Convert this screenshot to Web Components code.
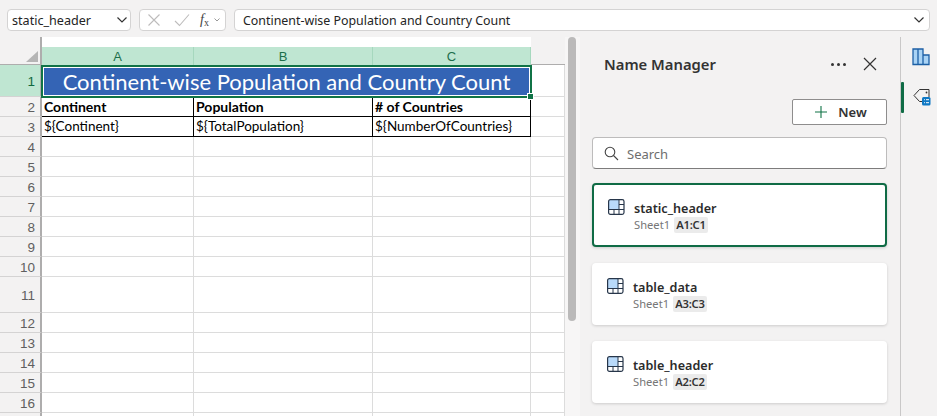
<!DOCTYPE html>
<html>
<head>
<meta charset="utf-8">
<style>
  html, body { margin: 0; height: 416px; overflow: hidden; background: #f3f2f2; }
  body { display: flex; flex-direction: column; font-family: "Noto Sans", sans-serif; color: #242424; }
  .main { display: flex; flex: 1; min-height: 0; }
</style>
</head>
<body>
<formula-bar name="static_header" formula="Continent-wise Population and Country Count"></formula-bar>
<div class="main">
  <sheet-grid></sheet-grid>
  <sheet-scroll></sheet-scroll>
  <name-panel>
    <name-card name="static_header" range="A1:C1" selected></name-card>
    <name-card name="table_data" range="A3:C3"></name-card>
    <name-card name="table_header" range="A2:C2"></name-card>
  </name-panel>
  <side-rail></side-rail>
</div>
<script>
class FormulaBar extends HTMLElement {
    constructor() {
        super();
        this.attachShadow({ mode: 'open' });
    }

    connectedCallback() {
        const name = this.getAttribute('name') || '';
        const formula = this.getAttribute('formula') || '';
        const chevron = `<svg width="12" height="8" viewBox="0 0 12 8"><path d="M1.5 1.5 6 6l4.5-4.5" fill="none" stroke="#333" stroke-width="1.2"/></svg>`;
        this.shadowRoot.innerHTML = `
            <style>
                :host { display: flex; height: 37px; padding: 9px 7px 0 7px; box-sizing: border-box; font: 12.4px "Noto Sans", sans-serif; color: #242424; background: #f3f2f2; }
                .box { height: 22px; box-sizing: border-box; background: #fff; border: 1px solid #d4d3d3; border-radius: 4px; display: flex; align-items: center; }
                .box span { padding-top: 1px; }
                .name { width: 124px; padding: 0 2px 0 4px; justify-content: space-between; font-size: 12.6px; }
                .fx { width: 87px; margin-left: 8px; padding-left: 7px; }
                .fx i { font: italic 14px "Liberation Serif", serif; color: #444; margin-left: 10px; }
                .fx i sub { font-size: 10px; font-style: normal; vertical-align: -2px; line-height: 0; }
                .formula { flex: 1; margin-left: 8px; padding: 0 4px 0 8px; justify-content: space-between; }
                .small { margin-left: 5px; }
            </style>
            <div class="box name"><span>${name}</span>${chevron}</div>
            <div class="box fx">
                <svg width="14" height="14" viewBox="0 0 14 14"><path d="M1.5 1.5l11 11M12.5 1.5l-11 11" stroke="#bdbcbc" stroke-width="1.1" fill="none"/></svg>
                <svg style="margin-left:13px" width="16" height="14" viewBox="0 0 16 14"><path d="M1 8l4.5 4.5L15 1.5" stroke="#bdbcbc" stroke-width="1.1" fill="none"/></svg>
                <i>f<sub>x</sub></i>
                <svg class="small" width="6" height="4" viewBox="0 0 6 4"><path d="M.5.5 3 3 5.5.5" stroke="#999" fill="none"/></svg>
            </div>
            <div class="box formula"><span>${formula}</span>${chevron}</div>
        `;
    }
}

class SheetGrid extends HTMLElement {
    constructor() {
        super();
        this.attachShadow({ mode: 'open' });
    }

    connectedCallback() {
        const heights = { 1: 32, 2: 20, 3: 19.5, 11: 36 };
        const rows = [];
        for (let i = 1; i <= 17; i++) rows.push(heights[i] || 20);
        let cells = '<div class="corner"><span></span></div>';
        ['A', 'B', 'C'].forEach(c => { cells += `<div class="col">${c}</div>`; });
        cells += '<div class="col rest"></div>';
        rows.forEach((h, idx) => {
            const r = idx + 1;
            // row 17 only shows its top edge in the window
            cells += `<div class="row ${r === 1 ? 'on' : ''}">${r < 17 ? r : ''}</div>`;
            if (r === 1) {
                cells += '<div class="title">Continent-wise Population and Country Count</div><div class="c"></div>';
            } else if (r === 2) {
                cells += '<div class="c b bold">Continent</div><div class="c b bold">Population</div><div class="c b bold"># of Countries</div><div class="c"></div>';
            } else if (r === 3) {
                cells += '<div class="c b">${Continent}</div><div class="c b">${TotalPopulation}</div><div class="c b">${NumberOfCountries}</div><div class="c"></div>';
            } else {
                cells += '<div class="c"></div><div class="c"></div><div class="c"></div><div class="c"></div>';
            }
        });
        this.shadowRoot.innerHTML = `
            <style>
                :host { display: block; width: 565px; overflow: hidden; background: #fff; position: relative; font-family: Lato, sans-serif; }
                .grid { display: grid; grid-template-columns: 42px 152px 179px 158px 34px; grid-template-rows: 28px ${rows.map(h => h + 'px').join(' ')}; }
                .corner { background: #f3f2f2; border-right: 2px solid #aeadad; border-bottom: 1px solid #aeadad; box-sizing: border-box; position: relative; }
                .corner span { position: absolute; right: 2px; bottom: 2px; width: 0; height: 0; border-left: 12px solid transparent; border-bottom: 11px solid #b5b5b5; }
                .col { margin-top: 10px; background: #bfe6d2; color: #1c6e4a; border-right: 1px solid #a6d8be; font: 13px "Liberation Sans", sans-serif; display: flex; align-items: center; justify-content: center; box-sizing: border-box; padding-top: 1px; }
                .col.rest { margin-top: 0; background: #f3f2f2; border-right: 0; border-bottom: 1px solid #aeadad; }
                .row { background: #f3f2f2; color: #5f5f5f; font: 13.5px "Liberation Sans", sans-serif; border-right: 2px solid #aeadad; border-bottom: 1px solid #d4d3d3; box-sizing: border-box; display: flex; align-items: center; justify-content: flex-end; padding: 2px 5px 0 0; }
                .row.on { background: #bfe6d2; color: #11693f; }
                .c { border-right: 1px solid #dcdcdc; border-bottom: 1px solid #dcdcdc; box-sizing: border-box; font-size: 13.5px; color: #000; padding: 0 2px; display: flex; align-items: center; white-space: nowrap; overflow: hidden; }
                .c.b { border-color: #000; }
                .c.bold { font-weight: 700; font-size: 14px; }
                .title { grid-column: span 3; background: #3464b5; color: #fff; font-size: 22px; display: flex; align-items: center; justify-content: center; position: relative; }
                .select { position: absolute; left: 41px; top: 28px; width: 491px; height: 32.5px; box-sizing: border-box; border: 2px solid #107346; box-shadow: inset 0 0 0 1px #fff; }
                .handle { position: absolute; right: -4px; bottom: -4px; width: 5px; height: 5px; background: #107346; border: 1px solid #fff; }
            </style>
            <div class="grid">${cells}</div>
            <div class="select"><div class="handle"></div></div>
        `;
    }
}

class SheetScroll extends HTMLElement {
    constructor() {
        super();
        this.attachShadow({ mode: 'open' }).innerHTML = `
            <style>
                :host { display: block; width: 15px; background: #f7f6f6; padding: 0 3px; box-sizing: border-box; }
                div { width: 8px; height: 284px; background: #bbbaba; border-radius: 4px; }
            </style>
            <div></div>
        `;
    }
}

class NamePanel extends HTMLElement {
    constructor() {
        super();
        this.attachShadow({ mode: 'open' }).innerHTML = `
            <style>
                :host { display: block; width: 320px; box-sizing: border-box; padding: 0 13px 0 12px; background: #f3f2f2; font-family: "Noto Sans", sans-serif; color: #242424; }
                header { height: 54px; display: flex; align-items: center; padding: 0 10px 0 12px; box-sizing: border-box; }
                h1 { flex: 1; margin: 0; font-size: 14.8px; font-weight: 600; color: #333; }
                .dots { display: flex; gap: 3px; margin-right: 17px; }
                .dots i { width: 3px; height: 3px; border-radius: 50%; background: #333; }
                .new { display: flex; height: 26px; width: 95px; margin: 8px 0 12px auto; box-sizing: border-box; background: #fff; border: 1px solid #8e8d8d; border-radius: 2px; align-items: center; justify-content: center; gap: 10px; font-size: 13px; font-weight: 600; color: #333; padding-left: 2px; }
                .search { height: 32px; box-sizing: border-box; background: #fff; border: 1px solid #bdbcbc; border-bottom-color: #7d7c7c; border-radius: 4px; display: flex; align-items: center; gap: 8px; padding: 1px 0 0 11px; font-size: 13px; color: #6e6e6e; margin-bottom: 14px; }
                .cards { display: flex; flex-direction: column; gap: 16px; }
            </style>
            <header>
                <h1>Name Manager</h1>
                <div class="dots"><i></i><i></i><i></i></div>
                <svg width="14" height="14" viewBox="0 0 14 14"><path d="M1 1l12 12M13 1 1 13" stroke="#333" stroke-width="1.2" fill="none"/></svg>
            </header>
            <div class="new">
                <svg width="14" height="14" viewBox="0 0 14 14"><path d="M7 1v12M1 7h12" stroke="#107346" stroke-width="1.1" fill="none"/></svg>
                <span>New</span>
            </div>
            <div class="search">
                <svg width="15" height="15" viewBox="0 0 15 15"><circle cx="6" cy="6" r="4.8" stroke="#444" stroke-width="1.1" fill="none"/><path d="M9.5 9.5 14 14" stroke="#444" stroke-width="1.1" fill="none"/></svg>
                <span>Search</span>
            </div>
            <div class="cards"><slot></slot></div>
        `;
    }
}

class NameCard extends HTMLElement {
    constructor() {
        super();
        this.attachShadow({ mode: 'open' });
    }

    connectedCallback() {
        const name = this.getAttribute('name');
        const range = this.getAttribute('range');
        this.shadowRoot.innerHTML = `
            <style>
                :host { display: flex; height: 62px; box-sizing: border-box; background: #fff; border-radius: 4px; padding: 15px 15px; gap: 9px; box-shadow: 0 1px 3px rgba(0,0,0,.16); font-family: "Noto Sans", sans-serif; }
                :host([selected]) { height: 64px; border: 2px solid #0f6b45; padding: 14px 14px; }
                svg { flex: none; }
                .name { font-size: 12.6px; font-weight: 600; color: #2b2b2b; line-height: 17px; margin-top: 1px; }
                .sub { display: flex; align-items: center; gap: 4px; font-size: 11.2px; color: #767676; line-height: 16px; }
                .sub b { font-weight: 600; color: #333; background: #ebebeb; border-radius: 2px; padding: 0 2px; letter-spacing: -.2px; }
            </style>
            <svg width="17" height="16" viewBox="0 0 17 16">
                <rect x="1" y="1" width="10" height="9.5" fill="#b9dafa"/>
                <rect x=".6" y=".6" width="15.4" height="14.8" rx="1.8" fill="none" stroke="#27364a" stroke-width="1.2"/>
                <path d="M.6 10.5h15.4M11 .6v14.8M11 5.5h5M6 10.5v5" fill="none" stroke="#27364a" stroke-width="1"/>
            </svg>
            <div>
                <div class="name">${name}</div>
                <div class="sub"><span>Sheet1</span><b>${range}</b></div>
            </div>
        `;
    }
}

class SideRail extends HTMLElement {
    constructor() {
        super();
        this.attachShadow({ mode: 'open' }).innerHTML = `
            <style>
                :host { display: flex; flex-direction: column; width: 37px; box-sizing: border-box; border-left: 1px solid #c9c8c8; background: #f3f2f2; position: relative; padding: 11px 0 0 11px; }
                .bar { position: absolute; left: 0; top: 45px; width: 3px; height: 31px; background: #0f6b45; border-radius: 1px; }
                .tag { margin-top: 22px; margin-left: 1px; }
            </style>
            <svg width="18" height="18" viewBox="0 0 18 18">
                <path d="M1 1h5v15.5H1zM6 1h5v15.5H6zM11 7h6v9.5h-6z" fill="#a9d3f5" stroke="#1c5fa5" stroke-width="1.3"/>
            </svg>
            <div class="bar"></div>
            <svg class="tag" width="18" height="18" viewBox="0 0 18 18">
                <path d="M16 9V1.5H6.500L1 7.500l5.500 6H9" fill="none" stroke="#333" stroke-width="1"/>
                <circle cx="13.5" cy="4.5" r=".9" fill="#333"/>
                <rect x="9" y="9" width="8.5" height="8.5" rx="1.5" fill="#0f78c4"/>
                <path d="M11 11.700h.9M13 11.700h3M11 14.700h.9M13 14.700h3" stroke="#fff" stroke-width="1"/>
            </svg>
        `;
    }
}

customElements.define('formula-bar', FormulaBar);
customElements.define('sheet-grid', SheetGrid);
customElements.define('sheet-scroll', SheetScroll);
customElements.define('name-panel', NamePanel);
customElements.define('name-card', NameCard);
customElements.define('side-rail', SideRail);
</script>
</body>
</html>
